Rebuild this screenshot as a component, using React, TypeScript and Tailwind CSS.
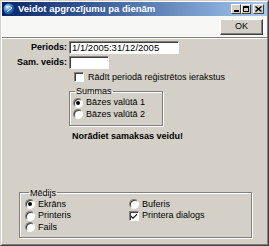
import React from "react";

const font = "font-['Liberation_Sans',Arial,sans-serif]";

function Radio({ checked = false }: { checked?: boolean }) {
  return (
    <span className="relative inline-flex h-[10px] w-[10px] shrink-0 items-center justify-center rounded-full border border-t-[#808080] border-l-[#808080] border-b-white border-r-white bg-white shadow-[inset_1px_1px_0_#404040]">
      {checked && <span className="h-[4px] w-[4px] rounded-full bg-black" />}
    </span>
  );
}

function Check({ checked = false }: { checked?: boolean }) {
  return (
    <span className="inline-flex h-[10px] w-[10px] shrink-0 items-center justify-center border border-t-[#808080] border-l-[#808080] border-b-white border-r-white bg-white shadow-[inset_1px_1px_0_#404040]">
      {checked && (
        <svg width="8" height="8" viewBox="0 0 8 8">
          <path d="M1 3.5 L3 5.5 L7 1.5 L7 3 L3 7 L1 5 Z" fill="#000" />
        </svg>
      )}
    </span>
  );
}

function Option({
  label,
  checked,
  kind = "radio",
}: {
  label: string;
  checked?: boolean;
  kind?: "radio" | "check";
}) {
  return (
    <div className="flex h-[11.5px] items-center gap-[3px]">
      {kind === "radio" ? <Radio checked={checked} /> : <Check checked={checked} />}
      <span className="leading-none">{label}</span>
    </div>
  );
}

function App() {
  return (
    <div className={`${font} h-[246px] w-[269px] border border-t-[#d4d0c8] border-l-[#d4d0c8] border-r-[#404040] border-b-[#404040] bg-[#d4d0c8] text-[9px] text-black`}>
      <div className="flex h-full flex-col border border-t-white border-l-white border-r-[#808080] border-b-[#808080]">
        {/* Title bar */}
        <header className="flex h-[14px] items-center bg-gradient-to-r from-[#0a246a] to-[#a6caf0] pl-[1px] pr-[3px]">
          <svg width="12" height="12" viewBox="0 0 12 12" className="shrink-0">
            <defs>
              <radialGradient id="g" cx="0.35" cy="0.35" r="0.7">
                <stop offset="0" stopColor="#d8ecff" />
                <stop offset="0.5" stopColor="#3a86d0" />
                <stop offset="1" stopColor="#0b3a80" />
              </radialGradient>
            </defs>
            <circle cx="6" cy="6" r="5.5" fill="url(#g)" />
            <path d="M3 4 Q6 2 9 5 Q6 7 4 9" stroke="#e8f4ff" strokeWidth="1" fill="none" />
          </svg>
          <span className="ml-[3px] mr-auto text-[9.5px] font-bold leading-none text-white">
            Veidot apgrozījumu pa dienām
          </span>
          <div className="flex gap-0">
            {["min", "max"].map((b) => (
              <span
                key={b}
                className="flex h-[10px] w-[10px] items-center justify-center border border-t-white border-l-white border-r-[#404040] border-b-[#404040] bg-[#d4d0c8]"
              >
                {b === "min" ? (
                  <span className="mt-[4px] h-[2px] w-[5px] bg-black" />
                ) : (
                  <span className="h-[6px] w-[6px] border border-t-2 border-black" />
                )}
              </span>
            ))}
          </div>
          <span className="ml-[2px] flex h-[10px] w-[11px] items-center justify-center border border-t-white border-l-white border-r-[#404040] border-b-[#404040] bg-[#d4d0c8]">
            <svg width="7" height="6" viewBox="0 0 7 6">
              <path d="M0.5 0.5 L6.5 5.5 M6.5 0.5 L0.5 5.5" stroke="#000" strokeWidth="1.4" />
            </svg>
          </span>
        </header>

        {/* Toolbar */}
        <div className="flex h-[21px] items-center justify-end bg-[#f7f7f5] pr-[4px]">
          <button className="flex h-[16px] w-[43px] items-center justify-center border border-t-white border-l-white border-r-[#404040] border-b-[#404040] bg-[#d4d0c8] text-[9px] leading-none shadow-[inset_-1px_-1px_0_#808080]">
            OK
          </button>
        </div>
        <div className="h-px bg-[#808080]" />
        <div className="h-px bg-white" />

        {/* Body */}
        <div className="flex flex-1 flex-col pb-[6px]">
          <div className="mt-[2px] flex items-center gap-[2px]">
            <span className="w-[65px] text-right font-bold leading-none">Periods:</span>
            <div className="flex h-[13px] w-[110px] items-center border border-t-[#808080] border-l-[#808080] border-b-white border-r-white bg-white pl-[2px] text-[9.5px] leading-none shadow-[inset_1px_1px_0_#404040]">
              1/1/2005:31/12/2005
            </div>
          </div>
          <div className="mt-[2px] flex items-center gap-[2px]">
            <span className="w-[65px] text-right font-bold leading-none">Sam. veids:</span>
            <div className="h-[13px] w-[40px] border border-t-[#808080] border-l-[#808080] border-b-white border-r-white bg-white shadow-[inset_1px_1px_0_#404040]" />
          </div>
          <div className="mt-[3px] flex items-center gap-[4px] pl-[72px]">
            <Check />
            <span className="leading-none">Rādīt periodā reģistrētos ierakstus</span>
          </div>

          {/* Summas */}
          <fieldset className="ml-[67px] mt-[4px] w-[94px] border border-[#808080] pb-[5px] pl-[3px] pt-[1px] shadow-[1px_1px_0_white,inset_1px_1px_0_white]">
            <legend className="ml-[2px] px-[1px] leading-[10px]">Summas</legend>
            <Option label="Bāzes valūtā 1" checked />
            <Option label="Bāzes valūtā 2" />
          </fieldset>

          <div className="mt-[6px] pl-[70px] font-bold leading-none">Norādiet samaksas veidu!</div>

          {/* Mēdijs */}
          <fieldset className="ml-[17px] mt-auto w-[233px] border border-[#808080] pb-[4px] pl-[5px] pt-[1px] shadow-[1px_1px_0_white,inset_1px_1px_0_white]">
            <legend className="ml-[4px] px-[1px] leading-[10px]">Mēdijs</legend>
            <div className="grid grid-cols-[104px_1fr]">
              <Option label="Ekrāns" checked />
              <Option label="Buferis" />
              <Option label="Printeris" />
              <Option label="Printera dialogs" kind="check" checked />
              <Option label="Fails" />
            </div>
          </fieldset>
        </div>
      </div>
    </div>
  );
}

export default App;
